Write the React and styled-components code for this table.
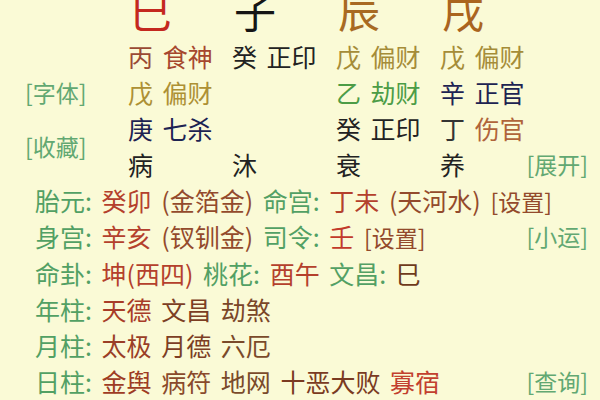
import React from "react";
import styled, { createGlobalStyle } from "styled-components";

const Global = createGlobalStyle`
  html, body { margin: 0; padding: 0; background: #fafad6; }
  body { font-family: "Noto Sans CJK SC", "Noto Sans", sans-serif; }
`;

const Page = styled.div`
  width: 600px;
  height: 400px;
  overflow: hidden;
  box-sizing: border-box;
  padding-right: 12px;
  background: #fafad6;
  font-size: 25px;
  word-spacing: 4px;
  color: #222;
  display: flex;
  flex-direction: column;
`;

const Columns = styled.div`
  display: grid;
  grid-template-columns: 128px repeat(4, 104px) 1fr;
`;

const Header = styled(Columns)`
  font-size: 42px;
  line-height: 19px;
  padding-bottom: 18.5px;
`;

const Pillar = styled.div`
  grid-column: ${(p) => p.$col};
  color: ${(p) => p.$c};
  padding-left: 2px;
`;

const Table = styled(Columns)`
  grid-auto-rows: 36.2px;
  line-height: 36.2px;
`;

const Cell = styled.div`
  grid-column: ${(p) => p.$col};
  grid-row: ${(p) => p.$row};
  white-space: nowrap;
`;

const SideTag = styled.div`
  grid-column: 1;
  grid-row: ${(p) => p.$row};
  align-self: center;
  padding-left: 25px;
  font-size: 23px;
  color: #62a872;
  white-space: nowrap;
`;

const EndTag = styled.div`
  grid-column: 5 / span 2;
  grid-row: ${(p) => p.$row};
  justify-self: end;
  font-size: 23px;
  color: #62a872;
  white-space: nowrap;
`;

const Tone = styled.span`
  color: ${(p) => p.$c};
`;

const Details = styled.div`
  display: flex;
  flex-direction: column;
  padding-left: 35px;
`;

const Line = styled.div`
  height: 36.2px;
  line-height: 36.2px;
  display: flex;
  justify-content: space-between;
  white-space: nowrap;
`;

const Label = styled.span`
  color: #52a064;
`;

const Tag = styled.span`
  font-size: 23px;
  color: ${(p) => p.$c || "#62a872"};
`;

const RED = "#b4402c";
const BROWN = "#934a2c";
const DARK = "#7c3e24";
const GOLD = "#a58c38";
const NAVY = "#1d2352";
const GREEN = "#4c9c46";
const INK = "#222";

export default function App() {
  return (
    <>
      <Global />
      <Page>
        <Header>
          <Pillar $col={2} $c="#c4281e">巳</Pillar>
          <Pillar $col={3} $c="#151515">子</Pillar>
          <Pillar $col={4} $c="#a86a22">辰</Pillar>
          <Pillar $col={5} $c="#aa641e">戌</Pillar>
        </Header>

        <Table>
          <Cell $col={2} $row={1}>
            <Tone $c="#9a4a34">丙</Tone> <Tone $c="#a6472e">食神</Tone>
          </Cell>
          <Cell $col={3} $row={1}>
            <Tone $c={INK}>癸 正印</Tone>
          </Cell>
          <Cell $col={4} $row={1}>
            <Tone $c={GOLD}>戊 偏财</Tone>
          </Cell>
          <Cell $col={5} $row={1}>
            <Tone $c={GOLD}>戊 偏财</Tone>
          </Cell>

          <SideTag $row={2}>[字体]</SideTag>
          <Cell $col={2} $row={2}>
            <Tone $c="#ad9034">戊 偏财</Tone>
          </Cell>
          <Cell $col={4} $row={2}>
            <Tone $c={GREEN}>乙 劫财</Tone>
          </Cell>
          <Cell $col={5} $row={2}>
            <Tone $c={NAVY}>辛 正官</Tone>
          </Cell>

          <SideTag $row="3 / span 2">[收藏]</SideTag>
          <Cell $col={2} $row={3}>
            <Tone $c={NAVY}>庚 七杀</Tone>
          </Cell>
          <Cell $col={4} $row={3}>
            <Tone $c={INK}>癸 正印</Tone>
          </Cell>
          <Cell $col={5} $row={3}>
            <Tone $c="#333">丁</Tone> <Tone $c="#b0643a">伤官</Tone>
          </Cell>

          <Cell $col={2} $row={4}>病</Cell>
          <Cell $col={3} $row={4}>沐</Cell>
          <Cell $col={4} $row={4}>衰</Cell>
          <Cell $col={5} $row={4}>养</Cell>
          <EndTag $row={4}>[展开]</EndTag>
        </Table>

        <Details>
          <Line>
            <span>
              <Label>胎元:</Label> <Tone $c={RED}>癸卯</Tone>{" "}
              <Tone $c={BROWN}>(金箔金)</Tone> <Label>命宫:</Label>{" "}
              <Tone $c={RED}>丁未</Tone> <Tone $c={BROWN}>(天河水)</Tone>{" "}
              <Tag $c={BROWN}>[设置]</Tag>
            </span>
          </Line>
          <Line>
            <span>
              <Label>身宫:</Label> <Tone $c={RED}>辛亥</Tone>{" "}
              <Tone $c={BROWN}>(钗钏金)</Tone> <Label>司令:</Label>{" "}
              <Tone $c="#c23a2a">壬</Tone> <Tag $c={BROWN}>[设置]</Tag>
            </span>
            <Tag>[小运]</Tag>
          </Line>
          <Line>
            <span>
              <Label>命卦:</Label> <Tone $c={RED}>坤(西四)</Tone>{" "}
              <Label>桃花:</Label> <Tone $c={RED}>酉午</Tone>{" "}
              <Label>文昌:</Label> <Tone $c="#6e3a1c">巳</Tone>
            </span>
          </Line>
          <Line>
            <span>
              <Label>年柱:</Label> <Tone $c="#a83c28">天德</Tone>{" "}
              <Tone $c={DARK}>文昌</Tone> <Tone $c="#7a4628">劫煞</Tone>
            </span>
          </Line>
          <Line>
            <span>
              <Label>月柱:</Label> <Tone $c="#9a3e26">太极</Tone>{" "}
              <Tone $c={DARK}>月德</Tone> <Tone $c="#7a4a2a">六厄</Tone>
            </span>
          </Line>
          <Line>
            <span>
              <Label>日柱:</Label> <Tone $c="#9e3c24">金舆</Tone>{" "}
              <Tone $c="#8a4a2c">病符</Tone> <Tone $c="#7a4a2a">地网</Tone>{" "}
              <Tone $c="#7a3a22">十恶大败</Tone> <Tone $c="#c2402e">寡宿</Tone>
            </span>
            <Tag>[查询]</Tag>
          </Line>
        </Details>
      </Page>
    </>
  );
}
